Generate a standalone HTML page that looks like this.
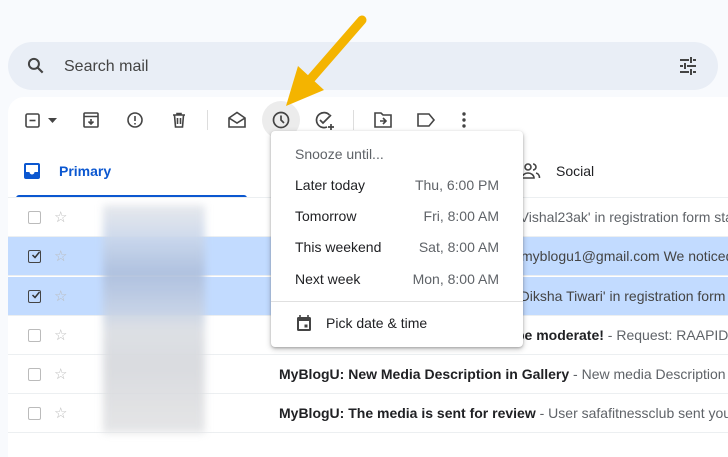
<!DOCTYPE html>
<html><head><meta charset="utf-8"><style>
*{margin:0;padding:0;box-sizing:border-box}
body{width:728px;height:438px;overflow:hidden;background:#f8fafd;font-family:"Liberation Sans",Arial,sans-serif;position:relative;color:#202124}
.abs{position:absolute}
.search{left:8px;top:42px;width:710px;height:48px;background:#e9eef6;border-radius:24px}
.panel{left:8px;top:97px;width:740px;height:360px;background:#fff;border-radius:16px 0 0 0}
.row{position:absolute;left:8px;width:720px;height:39px;border-bottom:1px solid #eceff1;font-size:14px;overflow:hidden}
.sel{background:#c2dbff}
.cb{position:absolute;left:20px;top:13px;width:13px;height:13px;border:1.5px solid #bbb;border-radius:2px}
.sel .cb{border-color:#444}
.star{position:absolute;left:46px;top:10px;font-size:15px;color:#bbb}
.txt{position:absolute;left:271px;top:11px;white-space:nowrap;color:#5f6368;font-size:14px}
.txt b{color:#202124}
.menu{left:271px;top:131px;width:252px;height:216px;background:#fff;border-radius:4px;box-shadow:0 2px 6px rgba(0,0,0,.25),0 1px 2px rgba(0,0,0,.2)}
.mi{position:absolute;left:24px;font-size:14px;color:#202124}
.mt{position:absolute;right:24px;font-size:14px;color:#5f6368}
svg.ic{position:absolute}
</style></head><body>
<div class="abs search"></div>
<svg class="ic" style="left:26px;top:56px" width="20" height="20" viewBox="0 0 24 24"><circle cx="9.5" cy="9.5" r="6" fill="none" stroke="#444" stroke-width="2.4"/><path d="M14 14l6 6" stroke="#444" stroke-width="2.6"/></svg>
<div class="abs" style="left:64px;top:58px;font-size:16px;color:#444">Search mail</div>
<svg class="ic" style="left:678px;top:56px" width="20" height="20" viewBox="0 0 20 20" stroke="#444" stroke-width="2" fill="none"><path d="M2 4h9M15 4h3M13 1v6M2 10h3M9 10h9M7 7v6M2 16h9M15 16h3M13 13v6"/></svg>
<div class="abs panel"></div>
<svg class="ic" style="left:25px;top:113px" width="16" height="16" viewBox="0 0 16 16"><rect x="1" y="1" width="13" height="13" rx="1.5" fill="none" stroke="#444" stroke-width="1.6"/><path d="M4.5 7.5h6" stroke="#444" stroke-width="1.6"/></svg>
<svg class="ic" style="left:48px;top:118px" width="9" height="6"><path d="M0 0h9L4.5 5z" fill="#444"/></svg>
<svg class="ic" style="left:82px;top:111px" width="18" height="18" viewBox="0 0 18 18" fill="none" stroke="#444" stroke-width="1.6"><rect x="2" y="2" width="14" height="14" rx="1"/><path d="M2 5.5h14M9 8v5M6.5 10.5L9 13l2.5-2.5"/></svg>
<svg class="ic" style="left:126px;top:111px" width="18" height="18" viewBox="0 0 18 18" fill="none" stroke="#444" stroke-width="1.6"><circle cx="9" cy="9" r="7"/><path d="M9 5v5M9 12v1.5"/></svg>
<svg class="ic" style="left:170px;top:111px" width="18" height="18" viewBox="0 0 18 18" fill="none" stroke="#444" stroke-width="1.6"><path d="M3 4h12M7 4V2.5h4V4M4.5 4l1 12h7l1-12M7.5 7v6M10.5 7v6"/></svg>
<div class="abs" style="left:207px;top:110px;width:1px;height:20px;background:#ddd"></div>
<svg class="ic" style="left:227px;top:110px" width="20" height="20" viewBox="0 0 20 20" fill="none" stroke="#444" stroke-width="1.6"><path d="M2 8l8-5.5L18 8v9H2zM2 8l8 5 8-5"/></svg>
<div class="abs" style="left:262px;top:101px;width:38px;height:38px;border-radius:50%;background:#ececec"></div>
<svg class="ic" style="left:271px;top:110px" width="20" height="20" viewBox="0 0 20 20" fill="none" stroke="#444" stroke-width="1.7"><circle cx="10" cy="10" r="7.5"/><path d="M10 5.5V10l3 3"/></svg>
<svg class="ic" style="left:314px;top:110px" width="22" height="22" viewBox="0 0 22 22" fill="none" stroke="#444" stroke-width="1.7"><path d="M15.5 5A7.5 7.5 0 1 0 13 17"/><path d="M6 10l3 3 8-8M14 17h6M17 14v6"/></svg>
<div class="abs" style="left:353px;top:110px;width:1px;height:20px;background:#ddd"></div>
<svg class="ic" style="left:373px;top:111px" width="20" height="18" viewBox="0 0 20 18" fill="none" stroke="#444" stroke-width="1.6"><path d="M2 2h6l2 2h8v12H2zM7 10h6M10 7l3 3-3 3"/></svg>
<svg class="ic" style="left:416px;top:112px" width="20" height="16" viewBox="0 0 20 16" fill="none" stroke="#444" stroke-width="1.6"><path d="M2 2h11l5 6-5 6H2z"/></svg>
<svg class="ic" style="left:462px;top:112px" width="4" height="16"><circle cx="2" cy="2" r="1.7" fill="#444"/><circle cx="2" cy="8" r="1.7" fill="#444"/><circle cx="2" cy="14" r="1.7" fill="#444"/></svg>
<svg class="ic" style="left:24px;top:163px" width="16" height="16" viewBox="0 0 16 16"><rect x="0" y="0" width="16" height="16" rx="2" fill="#0b57d0"/><path d="M2 2h12v7h-3.5a2.5 2.5 0 0 1-5 0H2z" fill="#fff"/></svg>
<div class="abs" style="left:59px;top:163px;font-size:14px;color:#0b57d0;font-weight:bold">Primary</div>
<div class="abs" style="left:16px;top:195px;width:231px;height:3px;background:#0b57d0;border-radius:3px 3px 0 0"></div>
<div class="abs" style="left:8px;top:197px;width:720px;height:1px;background:#eceff1"></div>
<svg class="ic" style="left:521px;top:162px" width="20" height="18" viewBox="0 0 20 18" fill="none" stroke="#444" stroke-width="1.6"><circle cx="7" cy="5" r="3"/><path d="M1 16c0-3 3-5 6-5s6 2 6 5zM12 2a3 3 0 0 1 0 6M15 11c2 .5 3.5 2 3.5 5"/></svg>
<div class="abs" style="left:556px;top:163px;font-size:14px;color:#202124">Social</div>
<div class="row" style="top:198px"><div class="cb"></div><div class="star">☆</div><div class="txt" style="left:509px">'Vishal23ak' in registration form status</div></div>
<div class="row sel" style="top:237px"><div class="cb"></div><div class="star">☆</div><div class="txt" style="color:#444;left:513px">myblogu1@gmail.com We noticed</div></div>
<div class="row sel" style="top:277px"><div class="cb"></div><div class="star">☆</div><div class="txt" style="color:#444;left:509px">'Diksha Tiwari' in registration form</div></div>
<div class="row" style="top:316px"><div class="cb"></div><div class="star">☆</div><div class="txt" style="left:508px"><b>be moderate!</b> - Request: RAAPID, and more</div></div>
<div class="row" style="top:355px"><div class="cb"></div><div class="star">☆</div><div class="txt"><b>MyBlogU: New Media Description in Gallery</b> - New media Description</div></div>
<div class="row" style="top:394px"><div class="cb"></div><div class="star">☆</div><div class="txt"><b>MyBlogU: The media is sent for review</b> - User safafitnessclub sent you</div></div>
<svg class="ic" style="left:31px;top:250px" width="10" height="10"><path d="M1.5 5l2.5 2.5L8.5 2" stroke="#333" stroke-width="1.5" fill="none"/></svg>
<svg class="ic" style="left:31px;top:290px" width="10" height="10"><path d="M1.5 5l2.5 2.5L8.5 2" stroke="#333" stroke-width="1.5" fill="none"/></svg>
<div class="abs" style="left:103px;top:205px;width:102px;height:228px;background:linear-gradient(#e4e6ea,#c9d6ea 15%,#aebfdc 30%,#c4d0e4 45%,#dadde2 55%,#d6d8dc 70%,#dcdde0 85%,#e2e3e5);filter:blur(4px);opacity:.9"></div>
<div class="abs menu">
<div class="mi" style="top:15px;color:#5f6368">Snooze until...</div>
<div class="mi" style="top:46px">Later today</div><div class="mt" style="top:46px">Thu, 6:00 PM</div>
<div class="mi" style="top:77px">Tomorrow</div><div class="mt" style="top:77px">Fri, 8:00 AM</div>
<div class="mi" style="top:108px">This weekend</div><div class="mt" style="top:108px">Sat, 8:00 AM</div>
<div class="mi" style="top:140px">Next week</div><div class="mt" style="top:140px">Mon, 8:00 AM</div>
<div class="abs" style="left:0;top:170px;width:252px;height:1px;background:#e0e0e0"></div>
<svg class="ic" style="left:26px;top:184px" width="14" height="16" viewBox="0 0 14 16"><path d="M3 0v2M11 0v2" stroke="#444" stroke-width="1.6"/><rect x="0" y="2" width="14" height="14" rx="1.5" fill="#444"/><rect x="2" y="6" width="10" height="8" fill="#fff"/><rect x="7.5" y="9.5" width="3" height="3" fill="#444"/></svg>
<div class="mi" style="top:184px;left:55px">Pick date &amp; time</div>
</div>
<svg class="ic" style="left:270px;top:10px" width="110" height="110" viewBox="0 0 110 110">
<path d="M92 10L38 72" stroke="#f4b400" stroke-width="9" stroke-linecap="round"/>
<path d="M16 96L28 56L54 80z" fill="#f4b400"/>
</svg>
</body></html>
